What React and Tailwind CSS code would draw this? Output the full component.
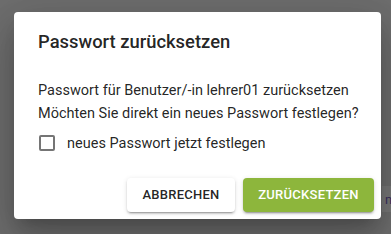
import React from 'react';

export default function App() {
    return (
        <div className="relative w-[391px] h-[234px] overflow-hidden bg-[#6e6e6e] font-['Roboto',sans-serif]">
            {/* page content behind the overlay */}
            <div className="absolute left-[382px] top-[186px] w-[20px] h-[26px] bg-[#787878] flex items-center pl-[3px] text-[13px] leading-none text-[#3a2f5e]">
                m
            </div>

            <div className="absolute left-[14px] top-[12px] w-[367px] h-[207px] bg-white rounded-[4px] shadow-[0_11px_15px_-7px_rgba(0,0,0,0.2),0_24px_38px_3px_rgba(0,0,0,0.14),0_9px_46px_8px_rgba(0,0,0,0.12)] flex flex-col">
                <div className="px-[24px] pt-[15px] text-[18.4px] leading-[30px] font-medium text-[rgba(0,0,0,0.87)]">
                    Passwort zurücksetzen
                </div>
                <div className="pl-[24px] pr-[8px] pt-[22px] text-[14.5px] leading-[23px] text-[rgba(0,0,0,0.87)] whitespace-nowrap">
                    <div>Passwort für Benutzer/-in lehrer01 zurücksetzen</div>
                    <div>Möchten Sie direkt ein neues Passwort festlegen?</div>
                    <label className="flex items-center gap-[12px] mt-[6px] h-[24px]">
                        <span className="w-[16px] h-[16px] ml-[1px] border-2 border-[#757575] rounded-[2px]" />
                        <span>neues Passwort jetzt festlegen</span>
                    </label>
                </div>
                <div className="mt-auto flex justify-end gap-[8px] px-[7px] pb-[7px]">
                    <button className="w-[108px] h-[34px] rounded-[4px] bg-white text-[13px] font-medium tracking-[0.02em] text-[rgba(0,0,0,0.87)] shadow-[0_3px_1px_-2px_rgba(0,0,0,0.2),0_2px_2px_0_rgba(0,0,0,0.14),0_1px_5px_0_rgba(0,0,0,0.12)]">
                        ABBRECHEN
                    </button>
                    <button className="w-[131px] h-[34px] rounded-[4px] bg-[#8db63c] text-[13px] font-medium tracking-[0.02em] text-white shadow-[0_3px_1px_-2px_rgba(0,0,0,0.2),0_2px_2px_0_rgba(0,0,0,0.14),0_1px_5px_0_rgba(0,0,0,0.12)]">
                        ZURÜCKSETZEN
                    </button>
                </div>
            </div>
        </div>
    );
}
